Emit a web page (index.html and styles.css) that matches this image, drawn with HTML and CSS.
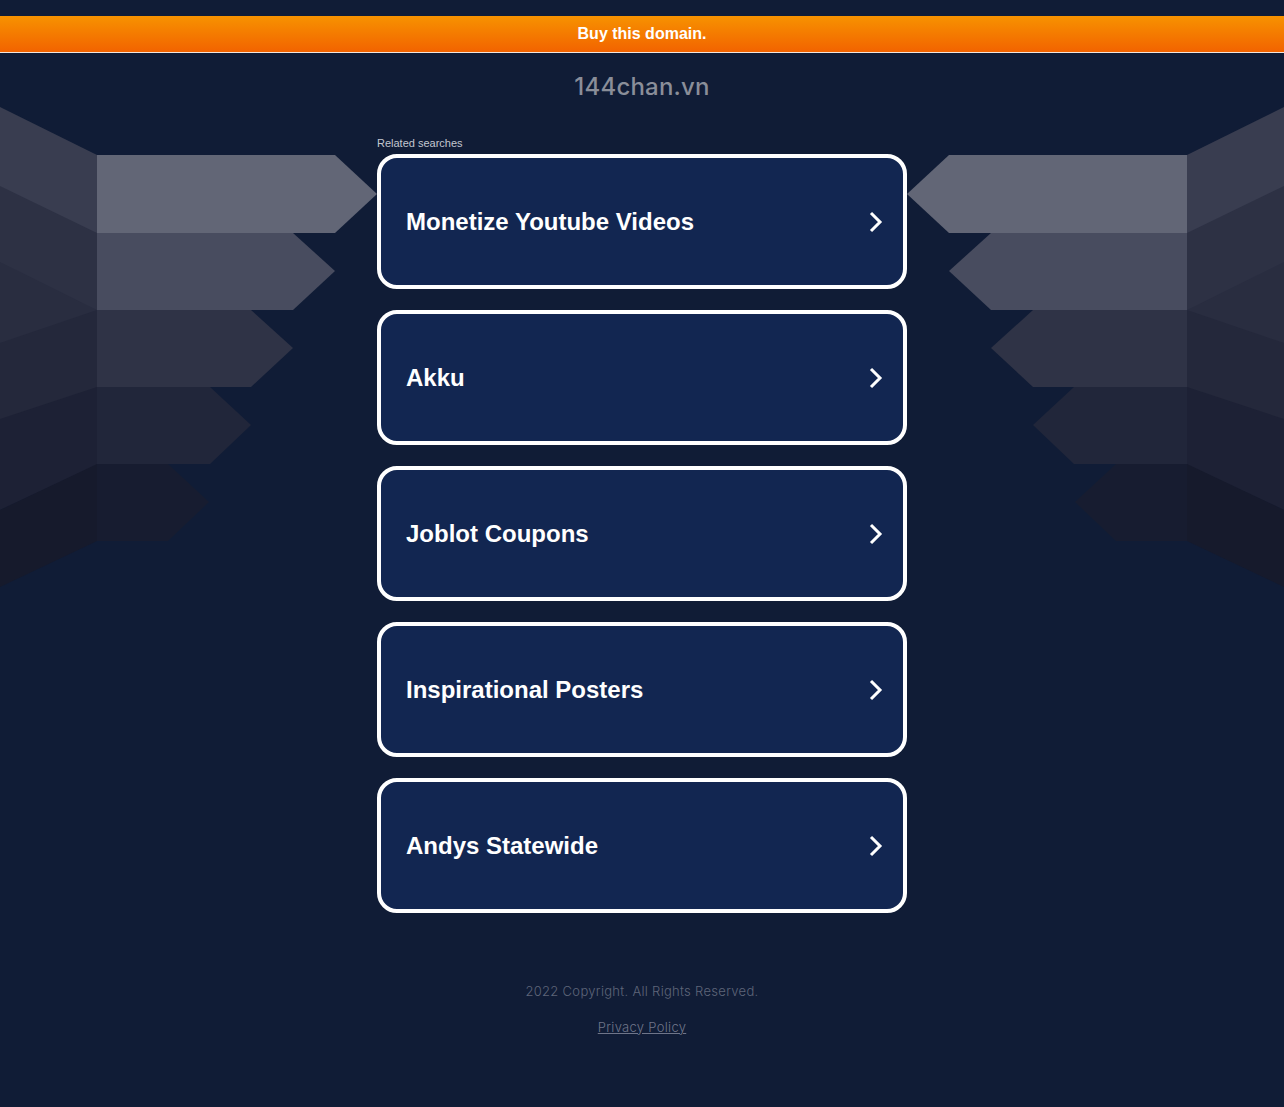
FILE: index.html
```html
<!DOCTYPE html>
<html lang="en">
<head>
  <meta charset="UTF-8" />
  <meta name="viewport" content="width=device-width, initial-scale=1.0"/>
  <title>144chan.vn</title>
  <link rel="stylesheet" href="styles.css">
</head>
<body>

  <!-- fondo decorativo -->
  <svg class="wings" width="1284" height="600" viewBox="0 0 1284 600" aria-hidden="true">
    <g id="wing">
      <polygon points="0,107 97,155 97,234 0,188" fill="#393d50"/>
      <polygon points="0,186 97,233 97,311 0,264" fill="#2d3144"/>
      <polygon points="0,262 97,310 97,340 0,343" fill="#292d40"/>
      <polygon points="0,343 97,310 97,388 0,421" fill="#24283b"/>
      <polygon points="0,419 97,387 97,465 0,510" fill="#1d2135"/>
      <polygon points="0,510 97,464 97,541 0,587" fill="#161a2c"/>
      <polygon points="97,155 335,155 377,194 335,233 97,233" fill="#626676"/>
      <polygon points="97,233 293,233 335,271 293,310 97,310" fill="#484c5f"/>
      <polygon points="97,310 251,310 293,348 251,387 97,387" fill="#2f3346"/>
      <polygon points="97,387 210,387 251,425 210,464 97,464" fill="#21263a"/>
      <polygon points="97,464 168,464 209,502 168,541 97,541" fill="#171c30"/>
    </g>
    <use href="#wing" transform="matrix(-1 0 0 1 1284 0)"/>
  </svg>

  <div class="buy">Buy this domain.</div>

  <h1 class="domain">144chan.vn</h1>

  <div class="related">
    <p class="related-title">Related searches</p>

    <a class="card" href="#">
      <span>Monetize Youtube Videos</span>
      <svg class="chev" width="14" height="22" viewBox="0 0 14 22"><path d="M2 2 L11 11 L2 20" fill="none" stroke="#fff" stroke-width="3"/></svg>
    </a>
    <a class="card" href="#">
      <span>Akku</span>
      <svg class="chev" width="14" height="22" viewBox="0 0 14 22"><path d="M2 2 L11 11 L2 20" fill="none" stroke="#fff" stroke-width="3"/></svg>
    </a>
    <a class="card" href="#">
      <span>Joblot Coupons</span>
      <svg class="chev" width="14" height="22" viewBox="0 0 14 22"><path d="M2 2 L11 11 L2 20" fill="none" stroke="#fff" stroke-width="3"/></svg>
    </a>
    <a class="card" href="#">
      <span>Inspirational Posters</span>
      <svg class="chev" width="14" height="22" viewBox="0 0 14 22"><path d="M2 2 L11 11 L2 20" fill="none" stroke="#fff" stroke-width="3"/></svg>
    </a>
    <a class="card" href="#">
      <span>Andys Statewide</span>
      <svg class="chev" width="14" height="22" viewBox="0 0 14 22"><path d="M2 2 L11 11 L2 20" fill="none" stroke="#fff" stroke-width="3"/></svg>
    </a>
  </div>

  <footer class="footer">
    <p>2022 Copyright. All Rights Reserved.</p>
    <a href="#">Privacy Policy</a>
  </footer>

</body>
</html>
```

FILE: styles.css
```css
body {
  margin: 0;
  background: #101c36;
  font-family: 'Liberation Sans', Arial, sans-serif;
  position: relative;
  min-height: 1107px;
}

.wings {
  position: absolute;
  top: 0;
  left: 0;
  z-index: 0;
}

.buy {
  position: relative;
  margin-top: 16px;
  height: 36px;
  line-height: 35px;
  text-align: center;
  color: #fff;
  font-weight: bold;
  font-size: 16px;
  background: linear-gradient(#f79200, #f26300);
  border-bottom: 1px solid #f3e6dc;
}

.domain {
  position: relative;
  margin: 19px 0 0;
  text-align: center;
  font-family: Inter, 'Open Sans', sans-serif;
  font-weight: 500;
  font-size: 24px;
  line-height: 29px;
  color: #8a8e99;
  letter-spacing: 0.2px;
}

.related {
  position: relative;
  z-index: 1;
  width: 530px;
  margin: 0 auto;
  padding-top: 36px;
}

.related-title {
  margin: 0 0 4px;
  font-size: 11px;
  line-height: 13px;
  color: #c3c7d0;
}

.card {
  display: flex;
  align-items: center;
  justify-content: space-between;
  box-sizing: border-box;
  height: 135px;
  margin-bottom: 21px;
  padding: 0 20px 0 25px;
  border: 4px solid #fff;
  border-radius: 20px;
  background: #122651;
  color: #fff;
  text-decoration: none;
  font-size: 24px;
  font-weight: bold;
}

.chev {
  display: block;
}

.footer {
  position: relative;
  text-align: center;
  font-family: Inter, 'Open Sans', sans-serif;
  font-weight: 300;
  font-size: 13px;
  letter-spacing: 0.3px;
  padding-top: 49px;
}

.footer p {
  margin: 0 0 20px;
  color: #5e6579;
}

.footer a {
  color: #6f7589;
}
```
